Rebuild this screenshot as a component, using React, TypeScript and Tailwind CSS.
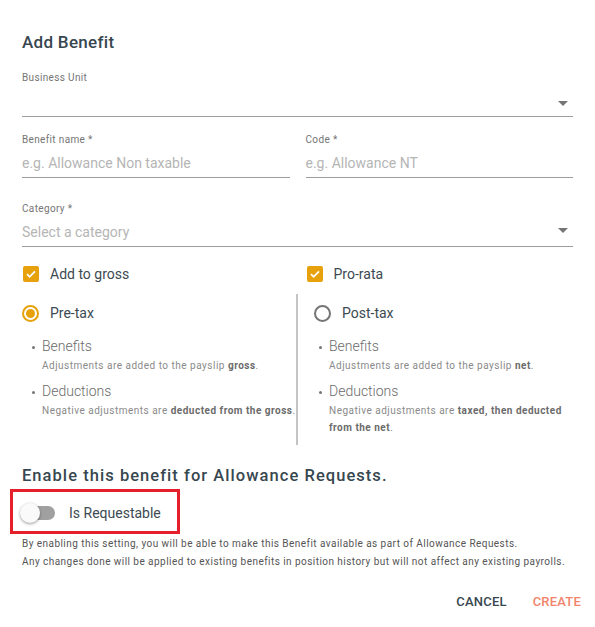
import React from 'react';

function Arrow() {
  return (
    <svg width="10" height="5" viewBox="0 0 10 5" className="mb-[10px] mr-[5px]">
      <path d="M0 0h10L5 5z" fill="#757575" />
    </svg>
  );
}

function Check({ label }: { label: string }) {
  return (
    <div className="flex h-[24px] items-center">
      <span className="ml-[1px] flex h-[16px] w-[16px] items-center justify-center rounded-[2px] bg-[#e6a10c]">
        <svg width="12" height="12" viewBox="0 0 12 12">
          <path d="M2 6.2l2.6 2.6L10 3.4" fill="none" stroke="white" strokeWidth="1.8" />
        </svg>
      </span>
      <span className="ml-[11px] text-[14px] text-[#3c4a52]">{label}</span>
    </div>
  );
}

function Radio({ label, on }: { label: string; on?: boolean }) {
  return (
    <div className="flex h-[24px] items-center">
      <span
        className={
          on
            ? 'flex h-[17px] w-[17px] items-center justify-center rounded-full border-2 border-[#e6a10c]'
            : 'flex h-[17px] w-[17px] items-center justify-center rounded-full border-2 border-[#757575]'
        }
      >
        {on && <span className="h-[9px] w-[9px] rounded-full bg-[#e6a10c]" />}
      </span>
      <span className="ml-[11px] text-[14px] text-[#3c4a52]">{label}</span>
    </div>
  );
}

function Bullet({ title, children }: { title: string; children: React.ReactNode }) {
  return (
    <div className="flex">
      <span className="mt-[10px] mr-[7px] h-[3px] w-[3px] shrink-0 rounded-full bg-[#757575]" />
      <div>
        <p className="text-[14px] leading-[20px] font-light text-[#6b6b6b]">{title}</p>
        <p className="mt-[1px] text-[10px] leading-[17px] tracking-[0.5px] text-[#8a8a8a]">{children}</p>
      </div>
    </div>
  );
}

export default function App() {
  return (
    <div className="h-[627px] w-[595px] bg-white px-[22px] pt-[30px] font-['Roboto',sans-serif]">
      <h2 className="text-[17px] leading-[24px] font-medium tracking-[0.3px] text-[#37474f]">Add Benefit</h2>

      <div className="mt-[17px]">
        <p className="text-[10px] leading-[14px] tracking-[0.35px] text-[#757575]">Business Unit</p>
        <div className="flex h-[32px] items-end justify-end border-b border-[#9e9e9e]">
          <Arrow />
        </div>
      </div>

      <div className="mt-[16px] grid grid-cols-2 gap-[16px]">
        <div>
          <p className="text-[10px] leading-[14px] tracking-[0.35px] text-[#757575]">Benefit name *</p>
          <div className="flex h-[31px] items-end border-b border-[#9e9e9e] pb-[4px] text-[14px] leading-[20px] text-[#b5b5b5]">
            e.g. Allowance Non taxable
          </div>
        </div>
        <div>
          <p className="text-[10px] leading-[14px] tracking-[0.35px] text-[#757575]">Code *</p>
          <div className="flex h-[31px] items-end border-b border-[#9e9e9e] pb-[4px] text-[14px] leading-[20px] text-[#b5b5b5]">
            e.g. Allowance NT
          </div>
        </div>
      </div>

      <div className="mt-[24px]">
        <p className="text-[10px] leading-[14px] tracking-[0.35px] text-[#757575]">Category *</p>
        <div className="flex h-[31px] items-end justify-between border-b border-[#9e9e9e] pb-[4px] text-[14px] leading-[20px] text-[#b5b5b5]">
          <span>Select a category</span>
          <span className="mb-[-1px]">
            <Arrow />
          </span>
        </div>
      </div>

      <div className="mt-[15px] grid grid-cols-2 gap-[16px]">
        <Check label="Add to gross" />
        <Check label="Pro-rata" />
      </div>

      <div className="mt-[8px] grid grid-cols-[276px_1fr]">
        <div className="border-r-2 border-[#c4c4c4] pt-[7px] pb-[15px]">
          <Radio label="Pre-tax" on />
          <div className="mt-[11px] ml-[10px] flex flex-col gap-[7px]">
            <Bullet title="Benefits">
              Adjustments are added to the payslip <b className="font-bold text-[#6b6b6b]">gross</b>.
            </Bullet>
            <Bullet title="Deductions">
              Negative adjustments are <b className="font-bold text-[#6b6b6b]">deducted from the gross</b>.
            </Bullet>
          </div>
        </div>
        <div className="pt-[7px] pb-[9px] pl-[16px]">
          <Radio label="Post-tax" />
          <div className="mt-[11px] ml-[5px] flex flex-col gap-[7px]">
            <Bullet title="Benefits">
              Adjustments are added to the payslip <b className="font-bold text-[#6b6b6b]">net</b>.
            </Bullet>
            <Bullet title="Deductions">
              Negative adjustments are <b className="font-bold text-[#6b6b6b]">taxed, then deducted from the net</b>.
            </Bullet>
          </div>
        </div>
      </div>

      <h3 className="mt-[19px] text-[16.5px] leading-[24px] font-medium tracking-[1.05px] text-[#37474f]">
        Enable this benefit for Allowance Requests.
      </h3>

      <div className="-ml-[12px] mt-[1px] flex h-[45px] w-[170px] items-center border-[3px] border-[#e5202a] pt-[3px] pl-[8px]">
        <div className="relative h-[14px] w-[34px] rounded-full bg-[#a0a0a0]">
          <span className="absolute -top-[3px] -left-[1px] h-[20px] w-[20px] rounded-full bg-[#fafafa] shadow-[0_1px_3px_rgba(0,0,0,0.4)]" />
        </div>
        <span className="ml-[14px] text-[14px] text-[#3c4a52]">Is Requestable</span>
      </div>

      <div className="mt-[1px] text-[10px] leading-[18px] tracking-[0.45px] text-[#555]">
        <p>By enabling this setting, you will be able to make this Benefit available as part of Allowance Requests.</p>
        <p>Any changes done will be applied to existing benefits in position history but will not affect any existing payrolls.</p>
      </div>

      <div className="mt-[21px] flex justify-end gap-[26px] text-[13px] font-medium tracking-[0.2px]">
        <span className="text-[#37474f]">CANCEL</span>
        <span className="mr-[-8px] text-[#f2846b]">CREATE</span>
      </div>
    </div>
  );
}
